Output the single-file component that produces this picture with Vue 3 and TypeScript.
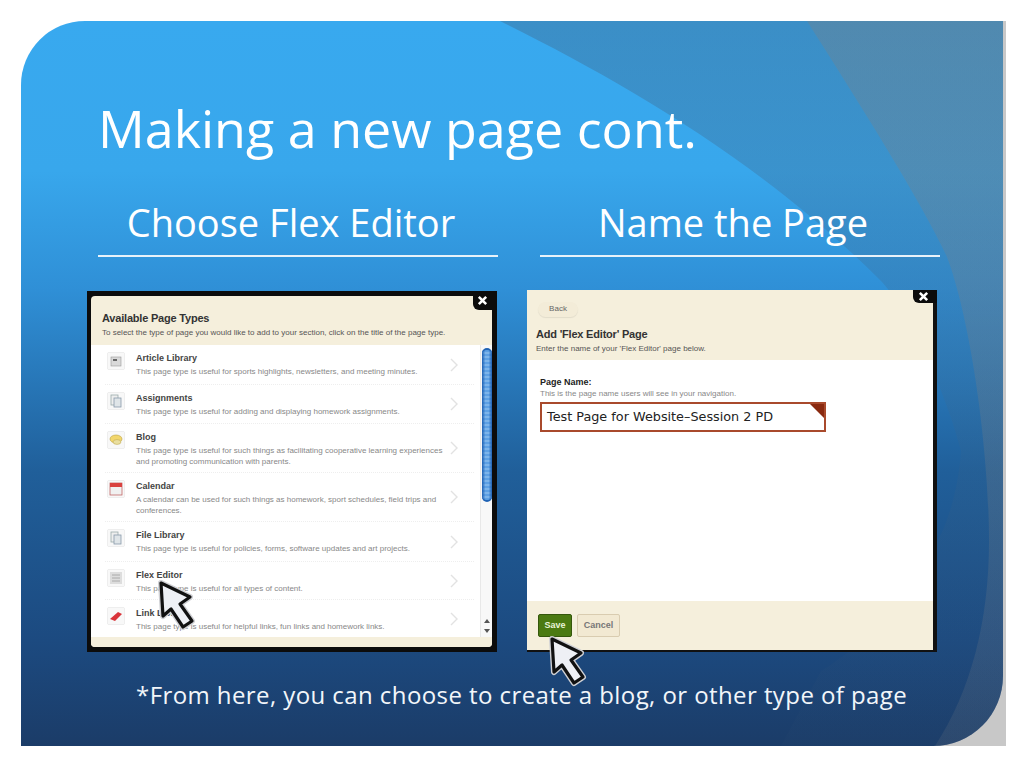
<template>
  <div class="page">
    <section class="slide">
      <!-- background swooshes -->
      <svg class="swoosh" width="982" height="725" viewBox="0 0 982 725" aria-hidden="true">
        <defs>
          <linearGradient id="shade" x1="0" y1="0" x2="0" y2="1">
            <stop offset="0" stop-color="#3f6a8f" stop-opacity=".42" />
            <stop offset=".5" stop-color="#3f6a8f" stop-opacity=".22" />
            <stop offset="1" stop-color="#2b4a70" stop-opacity=".12" />
          </linearGradient>
          <linearGradient id="band" x1="0" y1="0" x2="0" y2="1">
            <stop offset="0" stop-color="#7f7f7f" stop-opacity=".32" />
            <stop offset=".5" stop-color="#7f7f7f" stop-opacity=".26" />
            <stop offset="1" stop-color="#8a8a8a" stop-opacity=".14" />
          </linearGradient>
        </defs>
        <path d="M479 0 C600 60 740 140 859 259 C885 285 925 370 940 430 C938 460 930 495 917 519 C890 570 850 620 800 650 L760 725 L982 725 L982 0 Z" fill="url(#shade)" />
        <path d="M786 0 C840 85 900 180 926 236 C950 300 968 430 968 520 C968 600 950 670 914 725 L982 725 L982 0 Z" fill="url(#band)" />
      </svg>

      <h1 class="title">Making a new page cont.</h1>

      <div class="heads">
        <h2 class="head">Choose Flex Editor</h2>
        <h2 class="head">Name the Page</h2>
      </div>

      <div class="panels">
        <div class="shot shot-left">
          <button class="close" type="button">
            <svg width="11" height="11" viewBox="0 0 12 12"><path d="M2 2 L10 10 M10 2 L2 10" stroke="#fff" stroke-width="2.8" /></svg>
          </button>
          <div class="inner">
            <header class="modal-head">
              <h3>Available Page Types</h3>
              <p>To select the type of page you would like to add to your section, click on the title of the page type.</p>
            </header>
            <div class="list-wrap">
              <ul class="list">
                <li v-for="t in pageTypes" :key="t.name" class="row" :style="{ height: t.h + 'px' }">
                  <span class="ico">
                    <svg width="14" height="14" viewBox="0 0 14 14">
                      <template v-if="t.icon === 'doc'">
                        <rect x="2" y="3" width="10" height="9" fill="#d9d9d9" stroke="#999" stroke-width=".6" />
                        <rect x="4" y="5" width="4" height="2" fill="#666" />
                      </template>
                      <template v-else-if="t.icon === 'page'">
                        <rect x="2" y="1" width="7" height="10" fill="#eee" stroke="#9aa" stroke-width=".8" />
                        <rect x="5" y="4" width="7" height="9" fill="#dfe5e8" stroke="#89a" stroke-width=".8" />
                      </template>
                      <template v-else-if="t.icon === 'blog'">
                        <ellipse cx="7" cy="6" rx="6" ry="4" fill="#f2d66b" stroke="#b9a040" stroke-width=".6" />
                        <ellipse cx="8" cy="9" rx="4" ry="2.4" fill="#eadfa0" stroke="#b9a040" stroke-width=".5" />
                      </template>
                      <template v-else-if="t.icon === 'cal'">
                        <rect x="1" y="1" width="12" height="12" fill="#f1f1f1" stroke="#b55" stroke-width=".7" />
                        <rect x="1" y="1" width="12" height="4" fill="#d9423f" />
                      </template>
                      <template v-else-if="t.icon === 'flex'">
                        <rect x="1" y="1" width="12" height="12" fill="#ddd" />
                        <path d="M3 4 H11 M3 7 H11 M3 10 H11" stroke="#aaa" />
                      </template>
                      <template v-else>
                        <path d="M1 10 L9 3 L13 5 L6 12 Z" fill="#d9343a" />
                      </template>
                    </svg>
                  </span>
                  <div class="row-text">
                    <strong>{{ t.name }}</strong>
                    <span>{{ t.desc }}</span>
                  </div>
                  <svg class="chev" width="8" height="14" viewBox="0 0 8 14"><path d="M1 1 L7 7 L1 13" fill="none" stroke="#e2e2e2" stroke-width="1.4" /></svg>
                </li>
              </ul>
              <div class="scroll">
                <div class="thumb"></div>
                <div class="arrows">
                  <span></span>
                  <span class="down"></span>
                </div>
              </div>
            </div>
            <div class="modal-foot-thin"></div>
          </div>
          <svg class="cursor cursor-a" width="44" height="54" viewBox="0 0 44 54" aria-hidden="true">
            <path :d="arrowPath" fill="none" stroke="#cfd0d4" stroke-width="6" stroke-linejoin="round" />
            <path :d="arrowPath" fill="#eef0f5" stroke="#111" stroke-width="3.2" stroke-linejoin="round" />
          </svg>
        </div>

        <div class="shot shot-right">
          <button class="close close-r" type="button">
            <svg width="11" height="11" viewBox="0 0 12 12"><path d="M2 2 L10 10 M10 2 L2 10" stroke="#fff" stroke-width="2.8" /></svg>
          </button>
          <div class="inner">
            <header class="modal-head modal-head-r">
              <span class="back">Back</span>
              <h3>Add 'Flex Editor' Page</h3>
              <p>Enter the name of your 'Flex Editor' page below.</p>
            </header>
            <div class="form">
              <label>Page Name:</label>
              <small>This is the page name users will see in your navigation.</small>
              <div class="field">Test Page for Website–Session 2 PD</div>
            </div>
            <footer class="actions">
              <span class="save">Save</span>
              <span class="cancel">Cancel</span>
            </footer>
          </div>
          <svg class="cursor cursor-b" width="44" height="54" viewBox="0 0 44 54" aria-hidden="true">
            <path :d="arrowPath" fill="none" stroke="#cfd0d4" stroke-width="6" stroke-linejoin="round" />
            <path :d="arrowPath" fill="#eef0f5" stroke="#111" stroke-width="3.2" stroke-linejoin="round" />
          </svg>
        </div>
      </div>

      <p class="note">*From here, you can choose to create a blog, or other type of page</p>
    </section>
  </div>
</template>

<script setup lang="ts">
type PageType = { name: string; desc: string; icon: string; h: number }

const arrowPath = 'M6 5 L35 19 L25 26 L37 43 L28 49 L16 31 L8 38 Z'

const pageTypes: PageType[] = [
  { name: 'Article Library', desc: 'This page type is useful for sports highlights, newsletters, and meeting minutes.', icon: 'doc', h: 40 },
  { name: 'Assignments', desc: 'This page type is useful for adding and displaying homework assignments.', icon: 'page', h: 39 },
  { name: 'Blog', desc: 'This page type is useful for such things as facilitating cooperative learning experiences and promoting communication with parents.', icon: 'blog', h: 49 },
  { name: 'Calendar', desc: 'A calendar can be used for such things as homework, sport schedules, field trips and conferences.', icon: 'cal', h: 49 },
  { name: 'File Library', desc: 'This page type is useful for policies, forms, software updates and art projects.', icon: 'page', h: 40 },
  { name: 'Flex Editor', desc: 'This page type is useful for all types of content.', icon: 'flex', h: 38 },
  { name: 'Link Library', desc: 'This page type is useful for helpful links, fun links and homework links.', icon: 'link', h: 37 }
]
</script>

<style>
html, body { margin: 0; background: #fff; }
</style>

<style scoped>
.page {
  width: 1024px;
  height: 768px;
  padding: 21px 21px 22px 21px;
  box-sizing: border-box;
  overflow: hidden;
  background: linear-gradient(#c8c8c8, #c8c8c8) 935px 21px / 71px 725px no-repeat;
}
.slide {
  position: relative;
  width: 982px;
  height: 725px;
  box-sizing: border-box;
  padding: 71px 0 0 77px;
  border-radius: 64px 0 70px 0;
  overflow: hidden;
  color: #fff;
  font-family: "Open Sans", "DejaVu Sans", sans-serif;
  background: linear-gradient(180deg, #38a9ef 0, #38a7ec 150px, #2f8fd6 270px, #205f9a 450px, #1c4a80 620px, #1b3c68 725px);
}
.swoosh { position: absolute; inset: 0; }
.title {
  position: relative;
  margin: 0;
  font-size: 52px;
  line-height: 72px;
  font-weight: 400;
}
.heads {
  position: relative;
  display: flex;
  gap: 42px;
  margin-top: 38px;
}
.head {
  width: 400px;
  box-sizing: border-box;
  margin: 0;
  height: 55px;
  border-bottom: 2px solid #e8f2fa;
  font-size: 38px;
  line-height: 40px;
  font-weight: 400;
  text-align: center;
  padding-right: 14px;
}
.panels {
  position: relative;
  display: flex;
  gap: 30px;
  margin: 33px 0 0 -11px;
}
.shot {
  position: relative;
  width: 410px;
  box-sizing: border-box;
  background: #0c0c0c;
  font-family: "Liberation Sans", Arial, sans-serif;
  color: #333;
}
.shot-left { height: 361px; margin-top: 1px; padding: 5px 5px 5px 4px; }
.shot-right { height: 362px; padding: 0 4px 2px 0; background: #111; }
.inner {
  height: 100%;
  display: flex;
  flex-direction: column;
  background: #f5efdc;
  border-radius: 4px;
  overflow: hidden;
}
.shot-right .inner { border-radius: 0; }
.close {
  position: absolute;
  right: 0;
  top: 0;
  width: 24px;
  height: 19px;
  border: 0;
  padding: 0 6px 0 0;
  box-sizing: border-box;
  border-radius: 0 0 0 6px;
  background: #0c0c0c;
  display: flex;
  align-items: center;
  justify-content: center;
  z-index: 2;
}
.close-r { height: 13px; padding: 0 4px 0 0; }
.modal-head { height: 49px; padding: 15px 11px 0; flex: none; box-sizing: border-box; }
.modal-head h3 {
  margin: 0;
  font-size: 11px;
  line-height: 14px;
  font-weight: 700;
  letter-spacing: -0.2px;
  color: #333;
}
.modal-head p { margin: 2px 0 0; font-size: 8px; line-height: 11px; color: #555; }
.modal-head-r { height: 70px; padding: 12px 9px 0; }
.back {
  display: block;
  width: 40px;
  height: 15px;
  border-radius: 8px;
  background: #f3ecd8;
  box-shadow: 0 1px 1px rgba(0,0,0,.08);
  font-size: 8px;
  line-height: 13px;
  text-align: center;
  color: #666;
  margin: 0 0 10px 2px;
}
.list-wrap { flex: 1; display: flex; background: #fff; min-height: 0; }
.list { flex: 1; min-width: 0; margin: 0; padding: 0 0 0 14px; list-style: none; }
.row {
  display: flex;
  box-sizing: border-box;
  padding-top: 7px;
  align-items: flex-start;
  border-bottom: 1px dotted #eee;
  margin-right: 6px;
}
.row:last-child { border-bottom: 0; }
.ico {
  width: 16px;
  height: 16px;
  margin: 1px 12px 0 3px;
  flex: none;
  background: #f8f8f8;
  box-shadow: 0 0 1px #999;
  display: flex;
  align-items: center;
  justify-content: center;
}
.row-text { flex: 1; min-width: 0; }
.row-text strong { display: block; font-size: 9px; line-height: 12px; color: #444; font-weight: 700; }
.row-text span { display: block; font-size: 8px; line-height: 11px; color: #888; margin-top: 2px; }
.chev { flex: none; align-self: center; margin: -7px 16px 0 6px; }
.scroll {
  width: 12px;
  flex: none;
  display: flex;
  flex-direction: column;
  justify-content: space-between;
  background: #f8f8f8;
  border-left: 1px solid #e8e8e8;
  box-sizing: border-box;
}
.thumb {
  height: 154px;
  width: 10px;
  margin: 3px 0 0 1px;
  border-radius: 5px;
  background:
    linear-gradient(90deg, #1f62b4 0, rgba(31,98,180,0) 35%, rgba(31,98,180,0) 65%, #1f62b4 100%),
    repeating-linear-gradient(180deg, #5da0e4 0, #5da0e4 2px, #7cb4ea 2px, #7cb4ea 4px);
  border-top: 2px solid #1f62b4;
  border-bottom: 2px solid #1f62b4;
  box-sizing: border-box;
}
.arrows { display: flex; flex-direction: column; gap: 6px; align-items: center; padding-bottom: 4px; }
.arrows span { width: 0; height: 0; border-left: 3px solid transparent; border-right: 3px solid transparent; border-bottom: 4px solid #555; }
.arrows .down { border-bottom: 0; border-top: 4px solid #555; }
.modal-foot-thin { height: 10px; flex: none; background: #f5efdc; }
.form { flex: 1; background: #fff; padding: 16px 13px 0; }
.form label { display: block; font-size: 9px; line-height: 12px; font-weight: 700; color: #222; }
.form small { display: block; font-size: 8px; line-height: 11px; color: #888; }
.field {
  position: relative;
  width: 286px;
  height: 30px;
  box-sizing: border-box;
  margin-top: 3px;
  border: 2px solid #a94a2c;
  font-family: "DejaVu Sans", sans-serif;
  font-size: 12.8px;
  line-height: 26px;
  padding-left: 5px;
  color: #222;
}
.field::after {
  content: "";
  position: absolute;
  top: 0;
  right: 0;
  border-top: 14px solid #8a2a10;
  border-left: 14px solid transparent;
}
.actions { height: 49px; flex: none; display: flex; align-items: flex-start; gap: 5px; padding: 13px 0 0 11px; box-sizing: border-box; }
.save {
  width: 34px; height: 23px; border-radius: 2px; background: #4b7a12; border: 1px solid #35570c;
  box-sizing: border-box; color: #e8f4d8; font-size: 9px; font-weight: 700; line-height: 21px; text-align: center;
}
.cancel {
  width: 43px; height: 23px; border-radius: 2px; background: #f2e9d2; border: 1px solid #d9ccb0;
  box-sizing: border-box; color: #777; font-size: 9px; font-weight: 700; line-height: 21px; text-align: center;
}
.cursor { position: absolute; z-index: 3; }
.cursor-a { left: 68px; top: 287px; }
.cursor-b { left: 19px; top: 344px; }
.note {
  position: relative;
  margin: 26px 0 0 38px;
  font-size: 24px;
  line-height: 33px;
  letter-spacing: 0.42px;
  color: #f2f6fa;
}
</style>
